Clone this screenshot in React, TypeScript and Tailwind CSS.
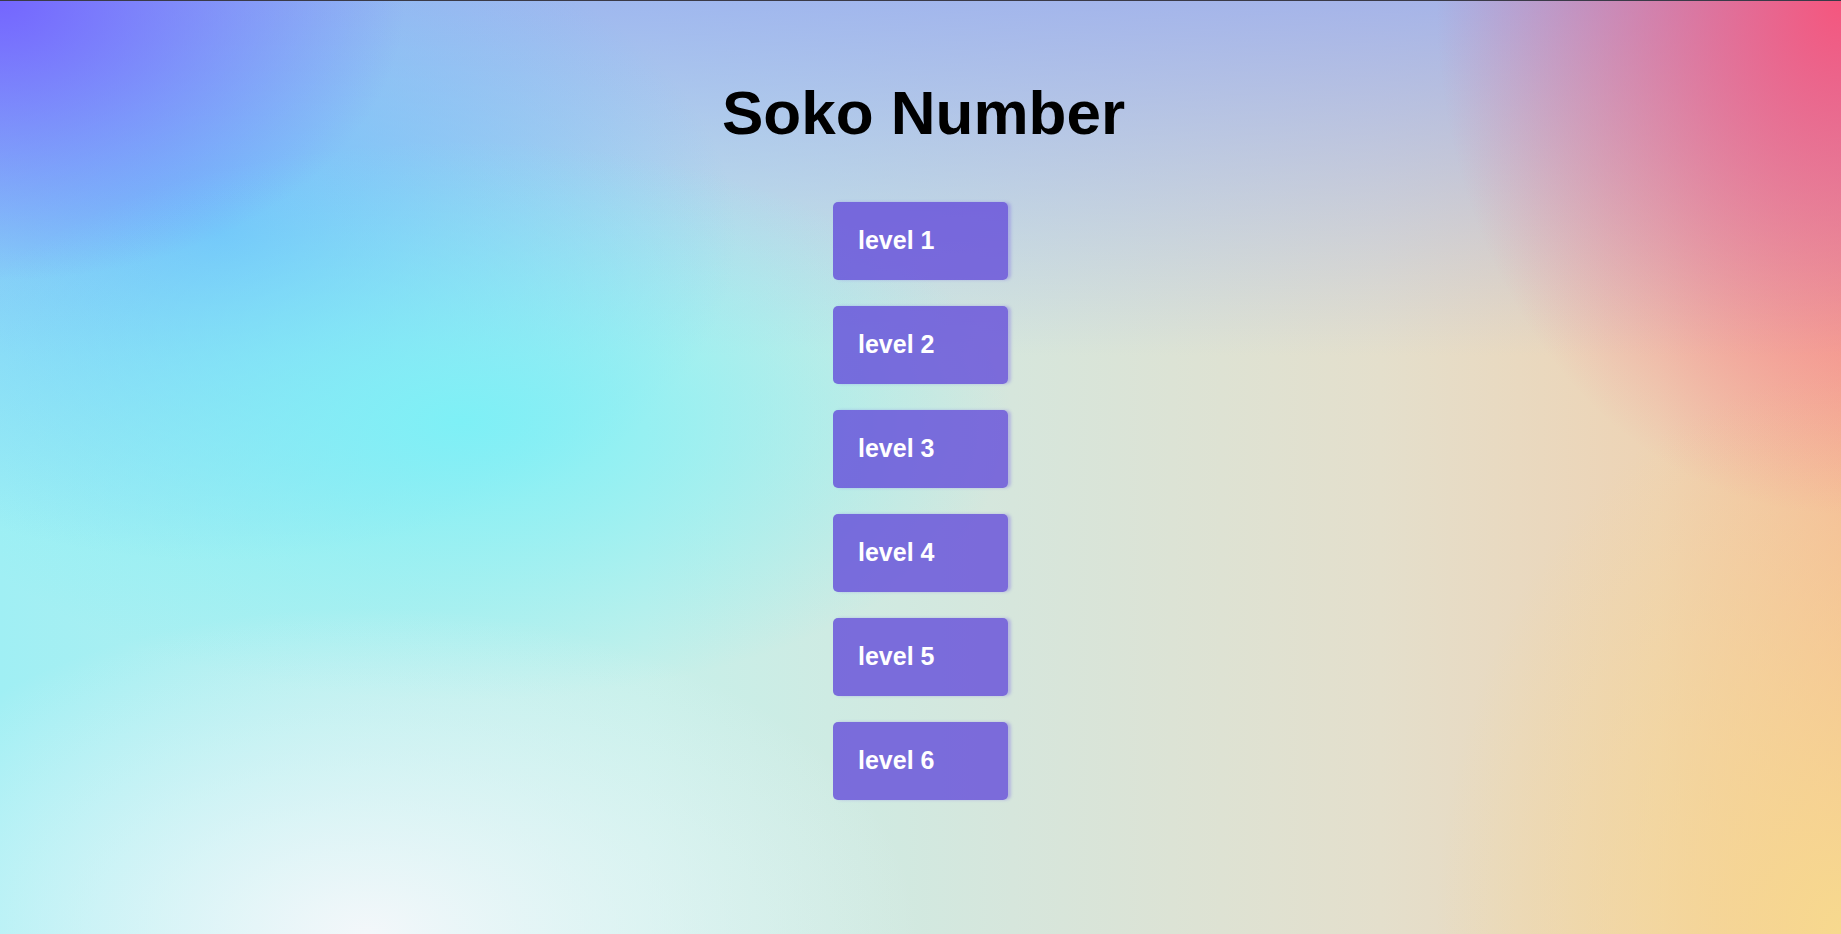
export default function App() {
  const levels = [1, 2, 3, 4, 5, 6];
  return (
    <div className="h-[934px] w-full overflow-hidden border-t border-[#3a3a48] bg-[#cfe6e6] bg-[radial-gradient(ellipse_22%_30%_at_0%_0%,#7466ff_0%,rgba(116,102,255,0)_100%),radial-gradient(ellipse_22%_55%_at_100%_0%,#f5567e_0%,rgba(245,86,126,0)_100%),radial-gradient(ellipse_22%_60%_at_100%_100%,#f7d98e_0%,rgba(247,217,142,0)_100%),radial-gradient(ellipse_30%_35%_at_20%_100%,#f3f7fa_0%,rgba(243,247,250,0)_100%),radial-gradient(ellipse_30%_30%_at_25%_45%,#7ef0f6_0%,rgba(126,240,246,0)_100%),radial-gradient(ellipse_28%_35%_at_12%_25%,#72bffb_0%,rgba(114,191,251,0)_100%),linear-gradient(to_bottom,rgba(150,170,240,0.8)_0%,rgba(150,170,240,0)_38%),linear-gradient(to_right,#a0eff4_0%,#c6f0ea_35%,#d6e6dc_55%,#e4dfcc_75%,#eed3b4_90%,#f4bc9c_100%)] font-['Liberation_Sans',Arial,sans-serif]">
      <div className="flex flex-col items-center pt-[76px]">
        <h1 className="pl-[6px] text-[62px] font-bold leading-[72px] text-black">Soko Number</h1>
        <div className="mt-[53px] flex flex-col gap-[26px]">
          {levels.map((n) => (
            <button
              key={n}
              className="flex h-[78px] w-[175px] items-center rounded-[5px] bg-[rgba(100,76,218,0.8)] pl-[25px] text-[25px] font-bold text-white shadow-[3px_0_3px_rgba(120,100,230,0.35)]"
            >
              level {n}
            </button>
          ))}
        </div>
      </div>
    </div>
  );
}
